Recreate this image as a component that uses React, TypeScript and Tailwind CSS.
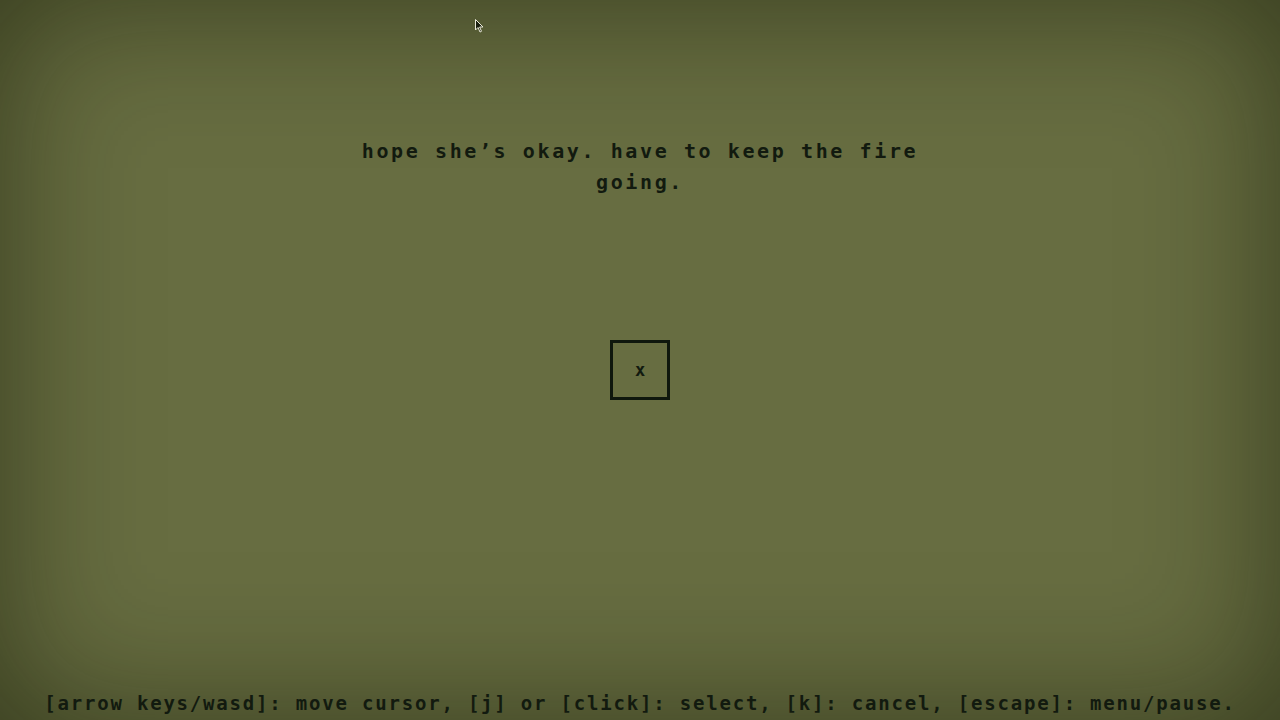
export default function App() {
  return (
    <div
      className="relative flex h-screen w-screen flex-col items-center overflow-hidden bg-[#676d41] text-[#121a0f] shadow-[inset_0_0_140px_rgba(20,25,5,0.6)]"
      style={{ fontFamily: '"DejaVu Sans Mono", "Liberation Mono", monospace' }}
    >
      <div className="pt-[136px] text-center text-[20px] font-bold leading-[31px] tracking-[2.6px]">
        hope she’s okay. have to keep the fire
        <br />
        going.
      </div>

      <div className="mt-[142px] flex h-[60px] w-[60px] items-center justify-center border-[3px] border-[#0f170d]">
        <span className="text-[17px] font-bold leading-none">x</span>
      </div>

      <div className="mt-auto pb-[5px] text-center text-[19px] font-bold leading-[24px] tracking-[1.8px] whitespace-nowrap">
        [arrow keys/wasd]: move cursor, [j] or [click]: select, [k]: cancel, [escape]: menu/pause.
      </div>

      <svg className="absolute left-[475px] top-[19px]" width="9" height="14" viewBox="0 0 9 14">
        <path d="M0.5 0.5 L0.5 11 L3 8.5 L5 13 L6.5 12.3 L4.6 8 L8 8 Z" fill="#1a1f10" stroke="#e8e8d8" strokeWidth="1" />
      </svg>
    </div>
  );
}
